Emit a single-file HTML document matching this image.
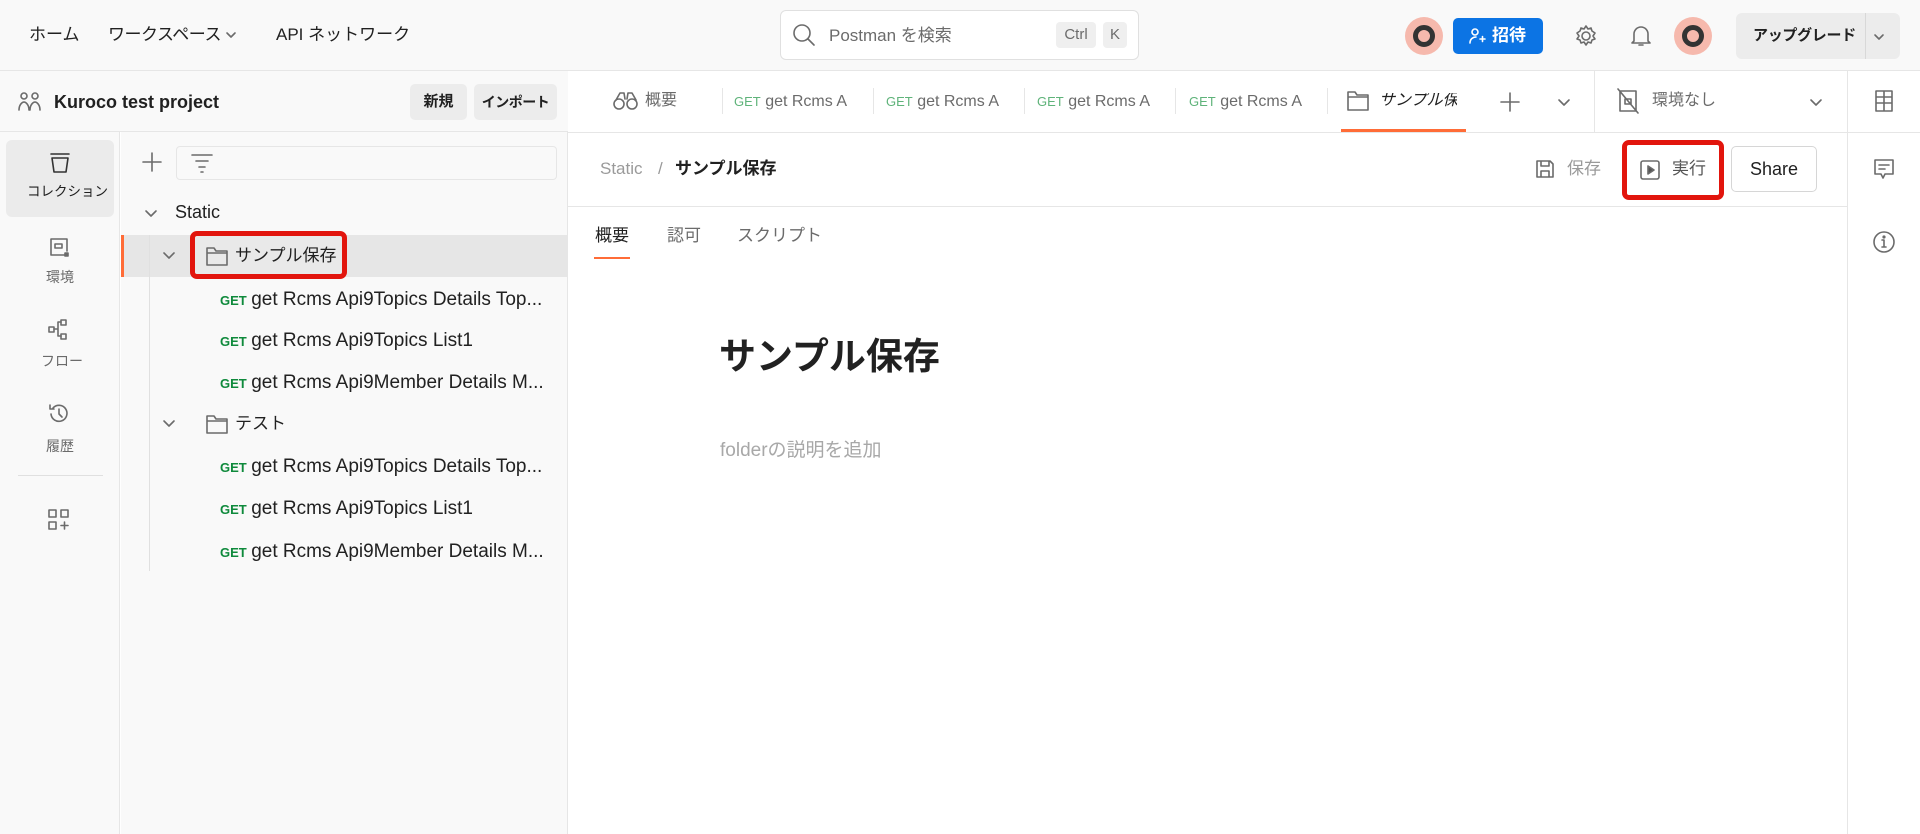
<!DOCTYPE html>
<html><head><meta charset="utf-8"><style>
*{box-sizing:border-box;margin:0;padding:0}
body{width:1920px;height:834px;overflow:hidden;background:#fff;font-family:"Liberation Sans","Noto Sans CJK JP",sans-serif;color:#212121;position:relative}
.a{position:absolute}
.t{position:absolute;white-space:nowrap;line-height:1}
svg{position:absolute;fill:none;stroke:#6b6b6b;stroke-width:1.6;stroke-linecap:round;stroke-linejoin:round}
.get{color:#0f8a3c;font-weight:bold;font-size:13px}
.getl{color:#5fb37a;font-size:13px}
.it{font-size:19px}
</style></head><body>
<!-- top bar -->
<div class="a" style="left:0;top:0;width:1920px;height:71px;background:#f9f9f9;border-bottom:1px solid #e6e6e6"></div>
<div class="t" style="left:29px;top:26px;font-size:17px">ホーム</div>
<div class="t" style="left:108px;top:26px;font-size:17px;letter-spacing:-0.5px">ワークスペース</div>
<svg style="left:224px;top:28px" width="14" height="14"><path d="M3 5l4 4 4-4"/></svg>
<div class="t" style="left:276px;top:26px;font-size:17px">API ネットワーク</div>
<div class="a" style="left:780px;top:10px;width:359px;height:50px;border:1px solid #e0e0e0;border-radius:6px;background:#fff"></div>
<svg style="left:791px;top:22px" width="26" height="26"><circle cx="11" cy="11" r="8"/><path d="M17 17l6 6"/></svg>
<div class="t" style="left:829px;top:27px;font-size:17px;color:#6b6b6b">Postman を検索</div>
<div class="a" style="left:1056px;top:22px;width:40px;height:26px;background:#efefef;border-radius:4px;font-size:15px;color:#6b6b6b;text-align:center;line-height:26px">Ctrl</div>
<div class="a" style="left:1103px;top:22px;width:24px;height:26px;background:#efefef;border-radius:4px;font-size:15px;color:#6b6b6b;text-align:center;line-height:26px">K</div>
<div class="a" style="left:1405px;top:17px;width:38px;height:38px;border-radius:50%;background:#f6b9ad"></div>
<div class="a" style="left:1413px;top:25px;width:22px;height:22px;border-radius:50%;border:5px solid #333"></div>
<div class="a" style="left:1453px;top:18px;width:90px;height:36px;background:#0c74e4;border-radius:5px"></div>
<svg style="left:1468px;top:27px;stroke:#fff" width="18" height="18"><circle cx="7" cy="5" r="3"/><path d="M2 16c0-4 3-6 6-6M12 12h5M14.5 9.5v5"/></svg>
<div class="t" style="left:1492px;top:27px;font-size:17px;color:#fff;font-weight:bold">招待</div>
<svg style="left:1573px;top:23px" width="26" height="26"><circle cx="13" cy="13" r="4"/><path d="M13 3l2 3 3-1 1 3 3 2-2 3 2 3-3 1-1 3-3-1-2 3-2-3-3 1-1-3-3-1 2-3-2-3 3-2 1-3 3 1z"/></svg>
<svg style="left:1629px;top:23px" width="24" height="26"><path d="M5 18V11a7 7 0 0 1 14 0v7l2 2H3z M10 22h4"/></svg>
<div class="a" style="left:1674px;top:17px;width:38px;height:38px;border-radius:50%;background:#f6b9ad"></div>
<div class="a" style="left:1682px;top:25px;width:22px;height:22px;border-radius:50%;border:5px solid #333"></div>
<div class="a" style="left:1736px;top:13px;width:164px;height:46px;background:#ececec;border-radius:6px"></div>
<div class="a" style="left:1865px;top:13px;width:1px;height:46px;background:#d8d8d8"></div>
<div class="t" style="left:1753px;top:28px;font-size:15px;font-weight:bold;letter-spacing:-0.3px">アップグレード</div>
<svg style="left:1872px;top:30px" width="14" height="14"><path d="M3 5l4 4 4-4"/></svg>

<!-- left rail -->
<div class="a" style="left:0;top:71px;width:120px;height:763px;background:#f9f9f9;border-right:1px solid #e6e6e6"></div>
<div class="a" style="left:0;top:71px;width:568px;height:61px;background:#f9f9f9;border-bottom:1px solid #e6e6e6"></div>
<svg style="left:17px;top:90px" width="26" height="24"><circle cx="7" cy="6" r="3"/><circle cx="18" cy="6" r="3"/><path d="M2 20c0-5 3-8 5-8s5 3 5 8M13 20c0-5 3-8 5-8s5 3 5 8"/></svg>
<div class="t" style="left:54px;top:93px;font-size:18px;font-weight:bold">Kuroco test project</div>
<div class="a" style="left:410px;top:84px;width:57px;height:36px;background:#ececec;border-radius:5px;font-size:15px;font-weight:bold;text-align:center;line-height:36px">新規</div>
<div class="a" style="left:474px;top:84px;width:83px;height:36px;background:#ececec;border-radius:5px;font-size:14px;font-weight:bold;text-align:center;line-height:36px;letter-spacing:-0.5px">インポート</div>
<div class="a" style="left:6px;top:140px;width:108px;height:77px;background:#ebebeb;border-radius:6px"></div>
<svg style="left:48px;top:151px;stroke:#333" width="24" height="24"><path d="M3 3h18M4 7h16l-2 14H6z"/></svg>
<div class="t" style="left:27px;top:185px;font-size:13.5px">コレクション</div>
<svg style="left:47px;top:235px" width="24" height="24"><path d="M18 20H4V4h16v12M8 9h7v4H8z"/><rect x="18" y="18" width="3" height="3" fill="#6b6b6b"/></svg>
<div class="t" style="left:46px;top:270px;font-size:14px;color:#6b6b6b">環境</div>
<svg style="left:47px;top:318px" width="24" height="24"><rect x="2" y="9" width="5" height="5"/><rect x="14" y="2" width="5" height="5"/><rect x="14" y="16" width="5" height="5"/><path d="M7 11h4M11 11V4h3M11 11v7h3"/></svg>
<div class="t" style="left:41px;top:354px;font-size:14px;color:#6b6b6b">フロー</div>
<svg style="left:47px;top:402px" width="24" height="24"><path d="M4 12a8 8 0 1 0 2-6M3 3v4h4M12 7v5l3 3"/></svg>
<div class="t" style="left:46px;top:439px;font-size:14px;color:#6b6b6b">履歴</div>
<div class="a" style="left:18px;top:475px;width:85px;height:1px;background:#e0e0e0"></div>
<svg style="left:47px;top:508px" width="24" height="24"><rect x="2" y="2" width="7" height="7"/><rect x="14" y="2" width="7" height="7"/><rect x="2" y="14" width="7" height="7"/><path d="M17.5 14v7M14 17.5h7"/></svg>

<!-- sidebar -->
<div class="a" style="left:121px;top:132px;width:447px;height:702px;background:#f9f9f9;border-right:1px solid #e6e6e6"></div>
<svg style="left:141px;top:151px" width="22" height="22"><path d="M11 2v18M2 11h18"/></svg>
<div class="a" style="left:176px;top:146px;width:381px;height:34px;border:1px solid #e6e6e6;border-radius:4px;background:#f9f9f9"></div>
<svg style="left:190px;top:152px" width="24" height="22"><path d="M2 3h20M6 9h12M9 15h6M11 20h2"/></svg>
<svg style="left:143px;top:206px" width="16" height="16"><path d="M3 5l5 5 5-5"/></svg>
<div class="t" style="left:175px;top:203px;font-size:18px">Static</div>
<div class="a" style="left:121px;top:235px;width:447px;height:42px;background:#e6e6e6"></div>
<div class="a" style="left:121px;top:235px;width:3px;height:42px;background:#ff6c37"></div>
<div class="a" style="left:149px;top:235px;width:1px;height:336px;background:#e0e0e0"></div>
<div class="a" style="left:190px;top:231px;width:157px;height:48px;border:5px solid #e2150d;border-radius:7px;background:#e9e9e9"></div>
<svg style="left:161px;top:248px" width="16" height="16"><path d="M3 5l5 5 5-5"/></svg>
<svg style="left:205px;top:245px" width="24" height="22"><path d="M2 3h7l2 3h11v14H2z M2 8h20"/></svg>
<div class="t" style="left:235px;top:247px;font-size:17px">サンプル保存</div>
<svg style="left:161px;top:416px" width="16" height="16"><path d="M3 5l5 5 5-5"/></svg>
<svg style="left:205px;top:413px" width="24" height="22"><path d="M2 3h7l2 3h11v14H2z M2 8h20"/></svg>
<div class="t" style="left:235px;top:415px;font-size:17px">テスト</div>
<div class="t" style="left:220px;top:290px"><span class="get">GET</span> <span class="it">get Rcms Api9Topics Details Top...</span></div>
<div class="t" style="left:220px;top:331px"><span class="get">GET</span> <span class="it">get Rcms Api9Topics List1</span></div>
<div class="t" style="left:220px;top:373px"><span class="get">GET</span> <span class="it">get Rcms Api9Member Details M...</span></div>
<div class="t" style="left:220px;top:457px"><span class="get">GET</span> <span class="it">get Rcms Api9Topics Details Top...</span></div>
<div class="t" style="left:220px;top:499px"><span class="get">GET</span> <span class="it">get Rcms Api9Topics List1</span></div>
<div class="t" style="left:220px;top:542px"><span class="get">GET</span> <span class="it">get Rcms Api9Member Details M...</span></div>

<!-- tab bar -->
<div class="a" style="left:568px;top:132px;width:1352px;height:1px;background:#e6e6e6"></div>
<svg style="left:612px;top:90px" width="28" height="22"><circle cx="7" cy="14" r="5"/><circle cx="20" cy="14" r="5"/><path d="M4 10l4-7h4l1 6M24 10l-4-7h-4l-1 6"/></svg>
<div class="t" style="left:645px;top:93px;font-size:16px;color:#6b6b6b">概要</div>
<div class="a" style="left:722px;top:88px;width:1px;height:26px;background:#e6e6e6"></div>
<div class="a" style="left:873px;top:88px;width:1px;height:26px;background:#e6e6e6"></div>
<div class="a" style="left:1024px;top:88px;width:1px;height:26px;background:#e6e6e6"></div>
<div class="a" style="left:1175px;top:88px;width:1px;height:26px;background:#e6e6e6"></div>
<div class="a" style="left:1327px;top:88px;width:1px;height:26px;background:#e6e6e6"></div>
<div class="t" style="left:734px;top:94px"><span class="getl">GET</span> <span style="font-size:16px;color:#6b6b6b">get Rcms A</span></div>
<div class="t" style="left:886px;top:94px"><span class="getl">GET</span> <span style="font-size:16px;color:#6b6b6b">get Rcms A</span></div>
<div class="t" style="left:1037px;top:94px"><span class="getl">GET</span> <span style="font-size:16px;color:#6b6b6b">get Rcms A</span></div>
<div class="t" style="left:1189px;top:94px"><span class="getl">GET</span> <span style="font-size:16px;color:#6b6b6b">get Rcms A</span></div>
<svg style="left:1346px;top:89px" width="24" height="24"><path d="M2 3h7l2 3h11v15H2z M2 8h20"/></svg>
<div class="t" style="left:1379px;top:93px;font-size:16px;font-style:italic;width:78px;overflow:hidden">サンプル保存</div>
<div class="a" style="left:1341px;top:129px;width:125px;height:3px;background:#ff6c37"></div>
<svg style="left:1499px;top:91px" width="22" height="22"><path d="M11 2v18M2 11h18"/></svg>
<svg style="left:1556px;top:96px" width="16" height="14"><path d="M3 4l5 5 5-5"/></svg>
<div class="a" style="left:1594px;top:71px;width:1px;height:61px;background:#e6e6e6"></div>
<svg style="left:1616px;top:88px" width="24" height="26"><path d="M4 3h16v20H4z M2 1l20 24 M9 11h6v5H9z"/></svg>
<div class="t" style="left:1652px;top:93px;font-size:16px;color:#6b6b6b">環境なし</div>
<svg style="left:1808px;top:96px" width="16" height="14"><path d="M3 4l5 5 5-5"/></svg>
<div class="a" style="left:1847px;top:71px;width:1px;height:763px;background:#e6e6e6"></div>
<svg style="left:1872px;top:89px" width="24" height="24"><path d="M4 2h16v20H4z M4 8h16 M4 14h16 M12 2v20"/></svg>

<!-- main -->
<div class="t" style="left:600px;top:160px;font-size:17px;color:#9a9a9a">Static</div>
<div class="t" style="left:658px;top:160px;font-size:17px;color:#9a9a9a">/</div>
<div class="t" style="left:675px;top:160px;font-size:17px;font-weight:bold">サンプル保存</div>
<svg style="left:1534px;top:158px" width="22" height="22"><path d="M3 3h13l3 3v13H3z M7 3v5h8V3 M7 19v-6h8v6"/></svg>
<div class="t" style="left:1567px;top:160px;font-size:17px;color:#9a9a9a">保存</div>
<div class="a" style="left:1622px;top:140px;width:102px;height:60px;border:5px solid #e2150d;border-radius:7px;background:#fff"></div>
<svg style="left:1639px;top:159px" width="22" height="22"><rect x="2" y="2" width="18" height="18" rx="2"/><path d="M9 7v8l6-4z" fill="#555"/></svg>
<div class="t" style="left:1672px;top:160px;font-size:17px;color:#555">実行</div>
<div class="a" style="left:1731px;top:146px;width:86px;height:46px;border:1px solid #d6d6d6;border-radius:5px;font-size:18px;text-align:center;line-height:44px">Share</div>
<div class="a" style="left:568px;top:206px;width:1279px;height:1px;background:#e6e6e6"></div>
<svg style="left:1872px;top:157px" width="24" height="24"><path d="M3 3h18v14h-8l-2 4-2-4H3z M7 8h10M7 12h6"/></svg>
<svg style="left:1871px;top:229px" width="26" height="26"><circle cx="13" cy="13" r="10"/><path d="M13 11v7M11 18h4M11 11h2"/><circle cx="13" cy="8" r="0.8" fill="#6b6b6b"/></svg>
<div class="t" style="left:595px;top:227px;font-size:17px">概要</div>
<div class="a" style="left:594px;top:257px;width:36px;height:2px;background:#ff6c37"></div>
<div class="t" style="left:667px;top:227px;font-size:17px;color:#6b6b6b">認可</div>
<div class="t" style="left:737px;top:227px;font-size:17px;color:#6b6b6b">スクリプト</div>
<div class="t" style="left:719px;top:338px;font-size:37px;font-weight:bold">サンプル保存</div>
<div class="t" style="left:720px;top:441px;font-size:19px;color:#a8a8a8">folderの説明を追加</div>
</body></html>
